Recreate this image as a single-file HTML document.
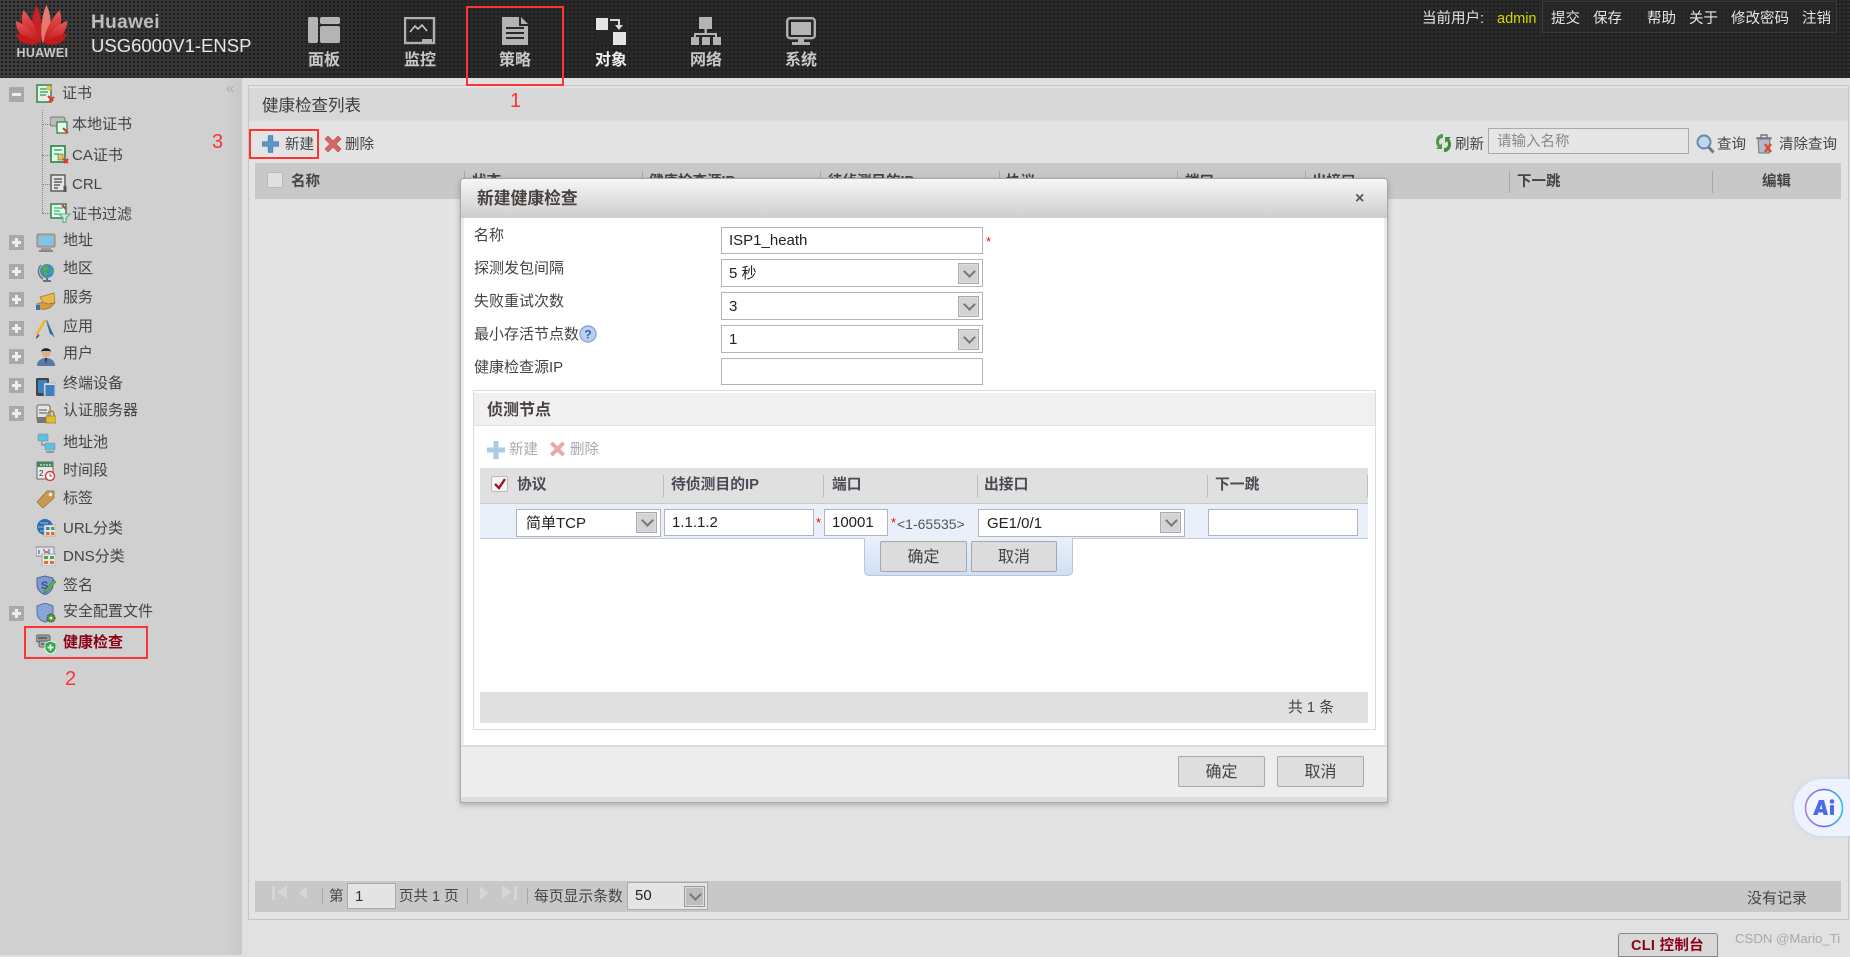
<!DOCTYPE html>
<html lang="zh">
<head>
<meta charset="utf-8">
<title>USG6000V1-ENSP</title>
<style>
*{box-sizing:border-box}
html,body{margin:0;padding:0;width:1850px;height:955px;overflow:hidden;background:#e1e1e1;font-family:"Liberation Sans","Noto Sans CJK SC",sans-serif;color:#444}
.a{position:absolute}
.t{position:absolute;white-space:nowrap;line-height:20px;height:20px;font-size:15px;color:#444;transform:translateY(1px)}
.b{font-weight:bold}
.hd{left:0;top:0;width:1850px;height:78px;background-color:#2a2a2a;background-image:radial-gradient(circle at 2px 2px,#1b1b1b 1px,transparent 1.3px),linear-gradient(90deg,#3e3e3e 0,#353535 200px,#2a2a2a 420px);background-size:4px 4px,100% 100%}
.nav{position:absolute;top:51px;width:60px;text-align:center;font-size:16px;font-weight:bold;color:#c9c9c9;line-height:20px}
.top{color:#e6e6e6;font-size:14.5px}
.side{left:0;top:78px;width:242px;height:877px;background:linear-gradient(90deg,#d0d0d0 0,#d0d0d0 225px,#c8c8c8 242px)}
.pl{position:absolute;left:9px;width:15px;height:15px;background:#a9a9a9}
.pl:before{content:"";position:absolute;left:3px;top:6px;width:9px;height:3px;background:#eee}
.pl.p:after{content:"";position:absolute;left:6px;top:3px;width:3px;height:9px;background:#eee}
.ic{position:absolute;left:36px;width:20px;height:20px}
.rd{position:absolute;border:2px solid #f33;background:transparent;z-index:9}
.num{position:absolute;color:#f33;font-size:20px;line-height:22px;z-index:9}
.sep{position:absolute;width:1px;background:#a8a8a8}
.in{position:absolute;background:#fff;border:1px solid #b4b4b8;font-size:15px;color:#222;line-height:25px;padding-left:7px;white-space:nowrap}
.dd{position:absolute;width:21px;height:21px;background:#d3d3d3;border:1px solid #aaa;box-shadow:inset 0 0 0 1px #ddd}
.dd:after{content:"";position:absolute;left:6px;top:3px;width:7px;height:7px;border-right:2px solid #777;border-bottom:2px solid #777;transform:rotate(45deg)}
.btn{position:absolute;background:#dcdcdc;border:1px solid #a8a8a8;border-radius:2px;text-align:center;font-size:16px;color:#444;line-height:31px}
.star{position:absolute;color:#f00;font-size:13px;line-height:13px;height:13px}
</style>
</head>
<body>

<!-- HEADER -->
<div class="a hd"></div>
<svg class="a" style="left:12px;top:2px" width="60" height="44" viewBox="0 0 60 44">
<defs><linearGradient id="pg" x1="0" y1="0" x2="0" y2="1"><stop offset="0" stop-color="#ea5a58"/><stop offset="1" stop-color="#c01318"/></linearGradient></defs>
<g fill="url(#pg)" transform="translate(29.5 41)">
<path d="M-1 0C-11 -10 -11 -26 -5 -38C-1 -30 2 -14 -1 0Z" fill="#c92024"/>
<path d="M1 0C11 -10 11 -26 5 -38C1 -30 -2 -14 1 0Z" fill="#e8786c"/>
<path d="M-2 0C-17 -6 -23 -20 -18 -33C-10 -24 -3 -12 -2 0Z"/>
<path d="M2 0C17 -6 23 -20 18 -33C10 -24 3 -12 2 0Z"/>
<path d="M-3 0C-16 -1 -26 -10 -25.500 -22C-15 -18 -6 -8 -3 0Z"/>
<path d="M3 0C16 -1 26 -10 25.500 -22C15 -18 6 -8 3 0Z"/>
<path d="M-4 1C-12 3 -23 1 -25.500 -9C-16 -9 -8 -3 -4 1Z" fill="#c41a1e"/>
<path d="M4 1C12 3 23 1 25.500 -9C16 -9 8 -3 4 1Z" fill="#c41a1e"/>
</g>
</svg>
<div class="t b" style="left:16.5px;top:42px;font-size:12.5px;color:#c8c8c8;letter-spacing:.3px">HUAWEI</div>
<div class="t b" style="left:91px;top:12px;font-size:19px;color:#bdbdbd;letter-spacing:.4px">Huawei</div>
<div class="t" style="left:91px;top:35px;font-size:18.500px;color:#e4e8ee">USG6000V1-ENSP</div>

<!-- nav icons -->
<svg class="a" style="left:308px;top:17px" width="32" height="28" viewBox="0 0 32 28" fill="#b4b4b4">
<rect x="0" y="0" width="10" height="26" rx="2"/><rect x="12" y="0" width="20" height="7" rx="2"/><rect x="12" y="9" width="20" height="17" rx="2"/></svg>
<svg class="a" style="left:404px;top:17px" width="32" height="28" viewBox="0 0 32 28">
<rect x="1" y="1" width="29" height="25" fill="none" stroke="#b0b0b0" stroke-width="2.4"/>
<path d="M6 15L11 9L14 12L18 8L23 14" fill="none" stroke="#c8c8c8" stroke-width="1.6"/>
<path d="M18 22h10v4h-10z" fill="#b0b0b0"/></svg>
<svg class="a" style="left:502px;top:17px" width="27" height="29" viewBox="0 0 27 29">
<path d="M0 0H17V9H26V28H0Z" fill="#b4b4b4"/><path d="M19 0L26 7H19Z" fill="#b4b4b4"/>
<path d="M4 11H22M4 16H22M4 21H22" stroke="#2a2a2a" stroke-width="2"/></svg>
<svg class="a" style="left:595px;top:17px" width="32" height="28" viewBox="0 0 32 28">
<rect x="0" y="0" width="32" height="28" fill="#262626"/>
<rect x="1" y="1" width="12" height="12" fill="#e4e4e4"/><rect x="18" y="15" width="13" height="13" fill="#e4e4e4"/>
<path d="M15 3H24V8" fill="none" stroke="#d8d8d8" stroke-width="2"/><path d="M20 8H28L24 13Z" fill="#d8d8d8"/></svg>
<svg class="a" style="left:690px;top:17px" width="32" height="28" viewBox="0 0 32 28" fill="#b4b4b4">
<rect x="9" y="0" width="13" height="12"/><rect x="14.5" y="12" width="2.4" height="6"/><path d="M4 16H27V20H25V18H6V20H4Z"/>
<path d="M1 20H9V28H1ZM12 20H20V28H12ZM23 20H31V28H23Z"/></svg>
<svg class="a" style="left:786px;top:17px" width="30" height="28" viewBox="0 0 30 28">
<rect x="1.2" y="1.2" width="27.6" height="20" rx="3" fill="none" stroke="#b0b0b0" stroke-width="2.4"/>
<rect x="5" y="5" width="20" height="13" fill="#b4b4b4"/><rect x="12" y="21" width="6" height="4" fill="#b0b0b0"/><rect x="6" y="25" width="18" height="3" fill="#b0b0b0"/></svg>

<div class="nav" style="left:294px">面板</div>
<div class="nav" style="left:390px">监控</div>
<div class="nav" style="left:485px">策略</div>
<div class="nav" style="left:581px;color:#f2f2f2">对象</div>
<div class="nav" style="left:676px">网络</div>
<div class="nav" style="left:771px">系统</div>

<div class="t top" style="left:1422px;top:8px">当前用户:</div>
<div class="t" style="left:1497px;top:8px;font-size:14.5px;color:#d6d600">admin</div>
<div class="a" style="left:1542px;top:1px;width:295px;height:32px;border:1px solid #3a3a3a;background:rgba(40,40,40,.5)"></div>
<div class="t top" style="left:1551px;top:8px">提交</div>
<div class="t top" style="left:1593px;top:8px">保存</div>
<div class="t top" style="left:1647px;top:8px">帮助</div>
<div class="t top" style="left:1689px;top:8px">关于</div>
<div class="t top" style="left:1731px;top:8px">修改密码</div>
<div class="t top" style="left:1802px;top:8px">注销</div>

<!-- SIDEBAR -->
<div class="a side"></div>
<div class="t" style="left:226px;top:78px;font-size:15px;color:#aaa">«</div>
<div class="a" style="left:42px;top:110px;height:103px;border-left:1px dotted #888"></div>
<div class="a" style="left:42px;top:124px;width:8px;border-top:1px dotted #888"></div>
<div class="a" style="left:42px;top:155px;width:8px;border-top:1px dotted #888"></div>
<div class="a" style="left:42px;top:184px;width:8px;border-top:1px dotted #888"></div>
<div class="a" style="left:42px;top:213px;width:8px;border-top:1px dotted #888"></div>

<div class="pl" style="top:87px"></div>
<div class="pl p" style="top:235px"></div>
<div class="pl p" style="top:264px"></div>
<div class="pl p" style="top:292px"></div>
<div class="pl p" style="top:321px"></div>
<div class="pl p" style="top:349px"></div>
<div class="pl p" style="top:378px"></div>
<div class="pl p" style="top:406px"></div>
<div class="pl p" style="top:606px"></div>

<!-- cert icon -->
<svg class="ic" style="top:84px" viewBox="0 0 20 20"><rect x="1" y="1" width="14" height="17" fill="#e8f0e4" stroke="#3f8a55" stroke-width="1.6"/><path d="M4 5H12M4 8H12M4 11H10" stroke="#4a7" stroke-width="1.4"/><path d="M12 12L17 17M13 18L18 13" stroke="#d33" stroke-width="2"/><circle cx="13" cy="4" r="2.5" fill="#e8c040"/></svg>
<svg class="a" style="left:50px;top:115px" width="20" height="20" viewBox="0 0 20 20"><rect x="0" y="2" width="15" height="9" rx="2" fill="#bbb" stroke="#777"/><rect x="7" y="7" width="10" height="11" fill="#dfe" stroke="#3f8a55" stroke-width="1.4"/><path d="M13 13L18 18" stroke="#d33" stroke-width="2"/></svg>
<svg class="a" style="left:50px;top:145px" width="20" height="20" viewBox="0 0 20 20"><rect x="1" y="1" width="14" height="16" fill="#dfe" stroke="#3f8a55" stroke-width="1.8"/><path d="M4 5H12M4 9H8" stroke="#4a7" stroke-width="1.4"/><rect x="8" y="9" width="5" height="6" fill="#e6c84a" stroke="#555" stroke-width=".6"/><path d="M13 14L18 18M14 18L18 14" stroke="#d33" stroke-width="2"/></svg>
<svg class="a" style="left:50px;top:174px" width="20" height="20" viewBox="0 0 20 20"><rect x="1" y="1" width="14" height="16" fill="#e4e4e4" stroke="#666" stroke-width="1.6"/><path d="M4 5H12M4 8H12M4 11H10M4 14H8" stroke="#444" stroke-width="1.3"/><path d="M15 12V18" stroke="#555" stroke-width="3"/></svg>
<svg class="a" style="left:50px;top:203px" width="21" height="20" viewBox="0 0 21 20"><rect x="1" y="1" width="15" height="14" fill="#dfe" stroke="#3f8a55" stroke-width="1.6"/><path d="M4 5H13M4 8H10M4 11H10" stroke="#4a7" stroke-width="1.3"/><path d="M9 11H20L16 15V19L13 20V15Z" fill="#cfe8d0" stroke="#5a9"/><path d="M12 2L16 6" stroke="#d33" stroke-width="2"/></svg>

<svg class="ic" style="top:233px" viewBox="0 0 20 20"><rect x="1" y="1" width="18" height="13" rx="1.5" fill="#aaa" stroke="#888"/><rect x="3" y="3" width="14" height="9" fill="#7ec6e6"/><rect x="5" y="15" width="10" height="2" fill="#9a9aa8"/><rect x="3" y="17" width="14" height="2" fill="#888"/></svg>
<svg class="ic" style="top:262px" viewBox="0 0 20 20"><circle cx="11" cy="9" r="7" fill="#3b8fcf"/><path d="M7 5L11 3L13 6L10 9L12 12L9 14L7 10ZM14 8L17 7L17 11L14 12Z" fill="#5bae3c"/><path d="M5 3A9 9 0 0 0 7 17" fill="none" stroke="#777" stroke-width="1.6"/><path d="M7 19H15M11 16V19" stroke="#666" stroke-width="1.8"/></svg>
<svg class="ic" style="top:291px" viewBox="0 0 20 20"><path d="M4 6L18 2L19 12L8 14Z" fill="#e8b850" stroke="#a87a20" stroke-width=".8"/><path d="M1 13C6 10 10 12 12 13L18 12C16 17 10 19 5 18H1Z" fill="#d89a40" stroke="#96702c" stroke-width=".8"/><rect x="0" y="14" width="4" height="5" fill="#3a6fb8"/></svg>
<svg class="ic" style="top:319px" viewBox="0 0 20 20"><path d="M1 16L9 2H11L18 18" fill="none" stroke="#777" stroke-width="1"/><path d="M9 1L1 15" stroke="#e8b830" stroke-width="2.6"/><path d="M10 2L18 17L14 15Z" fill="#1f6fb8"/><path d="M0 19L3 16" stroke="#555" stroke-width="1.6"/></svg>
<svg class="ic" style="top:347px" viewBox="0 0 20 20"><circle cx="10" cy="6" r="4.5" fill="#d8b08e"/><path d="M5 5C5 0 15 0 15 5L14 4H6Z" fill="#222"/><path d="M1 19C1 13 6 11 10 11C14 11 19 13 19 19Z" fill="#5878a8"/><path d="M9 11H11L10 17Z" fill="#222"/></svg>
<svg class="ic" style="top:377px" viewBox="0 0 20 20"><rect x="0" y="1" width="13" height="18" rx="1.5" fill="#444"/><rect x="2" y="3" width="9" height="13" fill="#3a82c4"/><rect x="8" y="6" width="12" height="14" rx="1" fill="#ddd" stroke="#999" stroke-width=".6"/><rect x="9.5" y="8" width="9" height="11" fill="#3d7fc2"/></svg>
<svg class="ic" style="top:404px" viewBox="0 0 20 20"><rect x="1" y="1" width="13" height="16" rx="2" fill="#e4e4e4" stroke="#666"/><path d="M3 6H11M3 9H11" stroke="#555"/><rect x="1" y="13" width="13" height="6" fill="#777"/><path d="M12 12V10A3 3 0 0 1 18 10V12" fill="none" stroke="#a08028" stroke-width="1.4"/><rect x="10" y="12" width="10" height="7" fill="#e2bb3c" stroke="#8a6e1a" stroke-width=".6"/></svg>
<svg class="ic" style="top:433px" viewBox="0 0 20 20"><rect x="2" y="1" width="10" height="7" rx="1" fill="#5cc0e8" stroke="#888" stroke-width=".6"/><rect x="9" y="10" width="10" height="7" rx="1" fill="#5cc0e8" stroke="#888" stroke-width=".6"/><path d="M6 8V12H9" fill="none" stroke="#888" stroke-width="1.2"/><rect x="10" y="18" width="8" height="2" fill="#999"/></svg>
<svg class="ic" style="top:461px" viewBox="0 0 20 20"><rect x="1" y="1" width="16" height="17" fill="#e8e8e8" stroke="#666"/><rect x="1" y="1" width="16" height="5" fill="#3f8a55"/><path d="M5 3V5M8 3V5M11 3V5M14 3V5" stroke="#fff"/><text x="3" y="15" font-size="8" fill="#333" font-family="Liberation Sans">2</text><circle cx="14" cy="15" r="4.5" fill="#fff" stroke="#d33" stroke-width="1.4"/><path d="M14 12.5V15H16" stroke="#555" fill="none"/></svg>
<svg class="ic" style="top:489px" viewBox="0 0 20 20"><path d="M1 13L11 2H18V9L7 19Z" fill="#c69a52" stroke="#96702c" stroke-width=".7"/><circle cx="14.5" cy="5.5" r="1.8" fill="#eee"/></svg>
<svg class="ic" style="top:518px" viewBox="0 0 20 20"><circle cx="9" cy="9" r="8" fill="#2a6eb0"/><path d="M4 5H12M2 9H16M4 13H12" stroke="#8ec4ea"/><rect x="8" y="7" width="12" height="11" fill="#e4e4e4" stroke="#999" stroke-width=".6"/><rect x="10" y="9" width="3.5" height="3" fill="#3a7fc0"/><rect x="15" y="9" width="3.5" height="3" fill="#5aa04a"/><rect x="10" y="14" width="3.5" height="3" fill="#e07030"/><rect x="15" y="14" width="3.5" height="3" fill="#e07030"/></svg>
<svg class="ic" style="top:546px" viewBox="0 0 20 20"><rect x="0" y="1" width="18" height="9" fill="#e4e4e4" stroke="#777" stroke-width=".8"/><path d="M3 4V8M7 4H9M13 3V8" stroke="#3a6fb8" stroke-width="1.2"/><path d="M8 6H12" stroke="#d33" stroke-width="1.4"/><rect x="6" y="8" width="14" height="12" fill="#e4e4e4" stroke="#888" stroke-width=".6"/><rect x="8" y="10" width="4" height="3" fill="#5aa04a"/><rect x="14" y="10" width="4" height="3" fill="#5aa04a"/><rect x="8" y="15" width="4" height="3" fill="#e07030"/><rect x="14" y="15" width="4" height="3" fill="#e07030"/></svg>
<svg class="ic" style="top:575px" viewBox="0 0 20 20"><path d="M1 3L9 1L17 3V10C17 15 13 18 9 20C5 18 1 15 1 10Z" fill="#7f9ad0" stroke="#4a66a0"/><text x="5" y="14" font-size="11" font-weight="bold" fill="#33508a" font-family="Liberation Sans">S</text><path d="M9 15L18 5L20 7L11 17L8 18Z" fill="#5eb04a" stroke="#2a6e2a" stroke-width=".5"/></svg>
<svg class="ic" style="top:603px" viewBox="0 0 20 20"><path d="M1 3L9 0L17 3V10C17 15 13 18 9 19C5 18 1 15 1 10Z" fill="#88a4d8" stroke="#5570a8"/><circle cx="15" cy="15" r="4" fill="#5a9a3a" stroke="#2a5a1e" stroke-dasharray="1.6 .8"/><circle cx="15" cy="15" r="1.4" fill="#dfd"/></svg>
<svg class="ic" style="top:634px" viewBox="0 0 20 20"><rect x="0" y="1" width="14" height="7" rx="2" fill="#999" stroke="#666"/><rect x="3" y="7" width="12" height="6" rx="1.5" fill="#aaa" stroke="#666"/><path d="M2 4H11M5 10H12" stroke="#333"/><path d="M9 9L14.500 7L20 9V14C20 17 17 19 14.500 20C12 19 9 17 9 14Z" fill="#2fa84a" stroke="#fff" stroke-width=".8"/><path d="M14.500 10.500V16.500M11.500 13.500H17.500" stroke="#fff" stroke-width="1.800"/></svg>

<div class="t" style="left:62px;top:83px">证书</div>
<div class="t" style="left:72px;top:114px">本地证书</div>
<div class="t" style="left:72px;top:145px">CA证书</div>
<div class="t" style="left:72px;top:174px">CRL</div>
<div class="t" style="left:72px;top:204px">证书过滤</div>
<div class="t" style="left:63px;top:230px">地址</div>
<div class="t" style="left:63px;top:258px">地区</div>
<div class="t" style="left:63px;top:287px">服务</div>
<div class="t" style="left:63px;top:316px">应用</div>
<div class="t" style="left:63px;top:343px">用户</div>
<div class="t" style="left:63px;top:373px">终端设备</div>
<div class="t" style="left:63px;top:400px">认证服务器</div>
<div class="t" style="left:63px;top:432px">地址池</div>
<div class="t" style="left:63px;top:460px">时间段</div>
<div class="t" style="left:63px;top:488px">标签</div>
<div class="t" style="left:63px;top:518px">URL分类</div>
<div class="t" style="left:63px;top:546px">DNS分类</div>
<div class="t" style="left:63px;top:575px">签名</div>
<div class="t" style="left:63px;top:601px">安全配置文件</div>
<div class="t b" style="left:63px;top:632px;color:#8b0015">健康检查</div>

<!-- MAIN PANEL -->
<div class="a" style="left:248px;top:85px;width:1601px;height:835px;background:#e3e3e3;border:1px solid #c6c6c6"></div>
<div class="a" style="left:249px;top:88px;width:1599px;height:33px;background:#d8d8d8;border-bottom:1px solid #dcdcdc"></div>
<div class="t" style="left:262px;top:95px;font-size:16.500px;color:#3c3c3c">健康检查列表</div>

<svg class="a" style="left:262px;top:134px" width="17" height="20" viewBox="0 0 18 20"><path d="M6.500 1H11.500V7.500H18V12.500H11.500V19H6.500V12.500H0V7.500H6.500Z" fill="#5f95c6" stroke="#3e73a6" stroke-width=".6"/></svg>
<div class="t" style="left:285px;top:134px;font-size:14.500px">新建</div>
<svg class="a" style="left:324px;top:135px" width="18" height="18" viewBox="0 0 18 18"><path d="M1 4L4 1L9 6L14 1L17 4L12 9L17 14L14 17L9 12L4 17L1 14L6 9Z" fill="#d5676a" stroke="#b04448" stroke-width=".6"/></svg>
<div class="t" style="left:345px;top:134px;font-size:14.500px">删除</div>

<svg class="a" style="left:1435px;top:133px" width="17" height="20" viewBox="0 0 17 20"><path d="M8 1C3 1 1 5 1 9C1 11 2 13 3 14L1 16H7V10L5 12C3 9 4 5 8 5Z" fill="#4c9a4a"/><path d="M9 19C14 19 16 15 16 11C16 9 15 7 14 6L16 4H10V10L12 8C14 11 13 15 9 15Z" fill="#3f8f3e"/></svg>
<div class="t" style="left:1455px;top:134px;font-size:14.500px">刷新</div>
<div class="a" style="left:1488px;top:128px;width:201px;height:26px;background:#e6e6e6;border:1px solid #aaa"></div>
<div class="t" style="left:1497px;top:131px;font-size:14.500px;color:#888">请输入名称</div>
<svg class="a" style="left:1696px;top:134px" width="19" height="20" viewBox="0 0 19 20"><circle cx="8" cy="8" r="6.500" fill="#bcd6f0" stroke="#6a88ac" stroke-width="2"/><path d="M12.500 13L17.500 18.500" stroke="#707a88" stroke-width="3"/></svg>
<div class="t" style="left:1717px;top:134px;font-size:14.500px">查询</div>
<svg class="a" style="left:1755px;top:134px" width="20" height="20" viewBox="0 0 20 20"><path d="M3 5H15L14 19H4Z" fill="#b4bccc" stroke="#6a7488"/><path d="M1 4H17M6 4V1H12V4" fill="none" stroke="#777" stroke-width="1.400"/><path d="M10 10L16 18M16 10L10 18" stroke="#d9502e" stroke-width="2.600"/></svg>
<div class="t" style="left:1779px;top:134px;font-size:14.500px">清除查询</div>

<!-- table head -->
<div class="a" style="left:255px;top:163px;width:1586px;height:36px;background:#c8c8c8"></div>
<div class="a" style="left:267px;top:172px;width:16px;height:16px;background:#e0e0e0;border:1px solid #b8b8b8;border-radius:2px"></div>
<div class="t b" style="left:291px;top:171px;font-size:14.500px">名称</div>
<div class="t b" style="left:472px;top:171px;font-size:14.500px">状态</div>
<div class="t b" style="left:649px;top:171px;font-size:14.500px">健康检查源IP</div>
<div class="t b" style="left:828px;top:171px;font-size:14.500px">待侦测目的IP</div>
<div class="t b" style="left:1006px;top:171px;font-size:14.500px">协议</div>
<div class="t b" style="left:1185px;top:171px;font-size:14.500px">端口</div>
<div class="t b" style="left:1312px;top:171px;font-size:14.500px">出接口</div>
<div class="t b" style="left:1517px;top:171px;font-size:14.500px">下一跳</div>
<div class="t b" style="left:1762px;top:171px;font-size:14.500px">编辑</div>
<div class="sep" style="left:464px;top:171px;height:22px"></div>
<div class="sep" style="left:642px;top:171px;height:22px"></div>
<div class="sep" style="left:820px;top:171px;height:22px"></div>
<div class="sep" style="left:999px;top:171px;height:22px"></div>
<div class="sep" style="left:1177px;top:171px;height:22px"></div>
<div class="sep" style="left:1305px;top:171px;height:22px"></div>
<div class="sep" style="left:1509px;top:171px;height:22px"></div>
<div class="sep" style="left:1712px;top:171px;height:22px"></div>

<!-- pagination -->
<div class="a" style="left:255px;top:881px;width:1586px;height:31px;background:#c8c8c8"></div>
<svg class="a" style="left:270px;top:884px" width="20" height="18" viewBox="0 0 20 18" fill="#d6d6d6"><rect x="2" y="2" width="3" height="14"/><path d="M17 1V15L7 8Z"/></svg>
<svg class="a" style="left:297px;top:884px" width="12" height="18" viewBox="0 0 12 18" fill="#d6d6d6"><path d="M10 2V16L2 9Z"/></svg>
<div class="sep" style="left:322px;top:888px;height:16px"></div>
<div class="t" style="left:329px;top:886px;font-size:14.500px">第</div>
<div class="a" style="left:347px;top:883px;width:49px;height:26px;background:#e4e4e4;border:1px solid #aaa;font-size:15px;line-height:25px;padding-left:7px;color:#333">1</div>
<div class="t" style="left:399px;top:886px;font-size:14.500px">页共 1 页</div>
<div class="sep" style="left:467px;top:888px;height:16px"></div>
<svg class="a" style="left:478px;top:884px" width="12" height="18" viewBox="0 0 12 18" fill="#d6d6d6"><path d="M2 2V16L10 9Z"/></svg>
<svg class="a" style="left:499px;top:884px" width="20" height="18" viewBox="0 0 20 18" fill="#d6d6d6"><path d="M3 1V15L13 8Z"/><rect x="15" y="2" width="3" height="14"/></svg>
<div class="sep" style="left:527px;top:888px;height:16px"></div>
<div class="t" style="left:534px;top:886px;font-size:14.800px">每页显示条数</div>
<div class="a" style="left:627px;top:882px;width:81px;height:28px;background:#e4e4e4;border:1px solid #aaa"></div>
<div class="t" style="left:635px;top:885px;font-size:15px;color:#222">50</div>
<div class="dd" style="left:684px;top:886px;background:#bdbdbd;border-color:#999"></div>
<div class="t" style="left:1747px;top:888px">没有记录</div>

<!-- CLI -->
<div class="a" style="left:1618px;top:933px;width:100px;height:24px;background:#d8d8d8;border:1px solid #888;border-radius:3px 3px 0 0"></div>
<div class="t b" style="left:1631px;top:935px;font-size:14.500px;color:#8b0015;letter-spacing:.3px">CLI 控制台</div>
<div class="t" style="left:1735px;top:928px;font-size:13.200px;color:#a8a8a8;z-index:9">CSDN @Mario_Ti</div>

<!-- AI -->
<div class="a" style="left:1794px;top:779px;width:70px;height:57px;border-radius:28px 0 0 28px;background:#edf2fe;box-shadow:0 0 5px #c4cef5"></div>
<svg class="a" style="left:1803px;top:787px" width="42" height="42" viewBox="0 0 42 42">
<defs><linearGradient id="ai" x1="0" y1="0" x2="1" y2="0"><stop offset="0" stop-color="#a77fe6"/><stop offset=".5" stop-color="#5d72ea"/><stop offset="1" stop-color="#2bc0ee"/></linearGradient></defs>
<circle cx="21" cy="21" r="18.500" fill="#f3f5ff" stroke="url(#ai)" stroke-width="1.600"/>
<path d="M10 28L16 13H21L25 28H20.500L20 25.500H15.500L14.500 28ZM16.800 22H19.300L18.400 17.500Z" fill="#4d6be6"/>
<rect x="27" y="18" width="4" height="10" rx="1" fill="#4d6be6"/><circle cx="29" cy="14.500" r="2.300" fill="#4d6be6"/></svg>

<!-- DIALOG -->
<div class="a" style="left:460px;top:178px;width:928px;height:625px;background:#ededed;border:1px solid #a8a8a8;border-radius:4px 4px 0 0;box-shadow:0 2px 6px rgba(0,0,0,.25)"></div>
<div class="a" style="left:461px;top:179px;width:926px;height:39px;background:linear-gradient(#f6f6f6,#cdcdcd);border-radius:3px 3px 0 0"></div>
<div class="a" style="left:461px;top:797px;width:926px;height:5px;background:#dcdcdc"></div>
<div class="t b" style="left:477px;top:188px;font-size:16.800px;color:#4a4040">新建健康检查</div>
<div class="t" style="left:1355px;top:188px;font-size:16px;color:#555;font-weight:bold">×</div>
<div class="a" style="left:464px;top:218px;width:920px;height:527px;background:#fff"></div>
<div class="a" style="left:461px;top:745px;width:926px;height:2px;background:#dcdcdc"></div>

<div class="t" style="left:474px;top:225px">名称</div>
<div class="t" style="left:474px;top:258px">探测发包间隔</div>
<div class="t" style="left:474px;top:291px">失败重试次数</div>
<div class="t" style="left:474px;top:324px">最小存活节点数</div>
<div class="t" style="left:474px;top:357px">健康检查源IP</div>
<svg class="a" style="left:579px;top:325px" width="18" height="18" viewBox="0 0 18 18"><circle cx="9" cy="9" r="8" fill="#bcd0ee" stroke="#8aa8d8" stroke-width="1.400"/><text x="9" y="13.500" font-size="12" font-weight="bold" text-anchor="middle" fill="#3a5ca8" font-family="Liberation Sans">?</text></svg>

<div class="in" style="left:721px;top:227px;width:262px;height:27px">ISP1_heath</div>
<div class="star" style="left:986px;top:235px">*</div>
<div class="in" style="left:721px;top:259px;width:262px;height:28px;line-height:27px">5 秒</div>
<div class="dd" style="left:958px;top:263px"></div>
<div class="in" style="left:721px;top:292px;width:262px;height:28px;line-height:27px">3</div>
<div class="dd" style="left:958px;top:296px"></div>
<div class="in" style="left:721px;top:325px;width:262px;height:28px;line-height:27px">1</div>
<div class="dd" style="left:958px;top:329px"></div>
<div class="in" style="left:721px;top:358px;width:262px;height:27px"></div>

<!-- section -->
<div class="a" style="left:473px;top:390px;width:903px;height:340px;border:1px solid #dcdcdc;background:#fff"></div>
<div class="a" style="left:474px;top:393px;width:901px;height:33px;background:#f0f0f0;border-bottom:1px solid #e4e4e4"></div>
<div class="t b" style="left:487px;top:400px;font-size:16px;color:#4a4040">侦测节点</div>

<svg class="a" style="left:487px;top:440px" width="18" height="20" viewBox="0 0 18 20"><path d="M6.500 1H11.500V7.500H18V12.500H11.500V19H6.500V12.500H0V7.500H6.500Z" fill="#a9cbe6"/></svg>
<div class="t" style="left:509px;top:439px;font-size:14.500px;color:#aaa">新建</div>
<svg class="a" style="left:549px;top:440px" width="17" height="18" viewBox="0 0 18 18"><path d="M1 4L4 1L9 6L14 1L17 4L12 9L17 14L14 17L9 12L4 17L1 14L6 9Z" fill="#eba9a9"/></svg>
<div class="t" style="left:570px;top:439px;font-size:14.500px;color:#aaa">删除</div>

<div class="a" style="left:480px;top:468px;width:888px;height:36px;background:#e0e0e0;border-bottom:1px solid #c8c8c8"></div>
<div class="a" style="left:491px;top:476px;width:17px;height:16px;background:#f4f4f4;border:1px solid #bbb;border-radius:2px"></div>
<svg class="a" style="left:492px;top:476px" width="16" height="16" viewBox="0 0 16 16"><path d="M3 8L7 12L13 3" fill="none" stroke="#a51423" stroke-width="2.400"/></svg>
<div class="t b" style="left:517px;top:474px;font-size:14.800px;color:#4a4a55">协议</div>
<div class="t b" style="left:671px;top:474px;font-size:14.800px;color:#4a4a55">待侦测目的IP</div>
<div class="t b" style="left:832px;top:474px;font-size:14.800px;color:#4a4a55">端口</div>
<div class="t b" style="left:984px;top:474px;font-size:14.800px;color:#4a4a55">出接口</div>
<div class="t b" style="left:1215px;top:474px;font-size:14.800px;color:#4a4a55">下一跳</div>
<div class="sep" style="left:663px;top:475px;height:22px;background:#bbb"></div>
<div class="sep" style="left:823px;top:475px;height:22px;background:#bbb"></div>
<div class="sep" style="left:977px;top:475px;height:22px;background:#bbb"></div>
<div class="sep" style="left:1207px;top:475px;height:22px;background:#bbb"></div>
<div class="sep" style="left:1367px;top:475px;height:22px;background:#bbb"></div>

<div class="a" style="left:480px;top:504px;width:888px;height:35px;background:#e9f0fa;border-bottom:1px solid #bccbdd"></div>
<div class="in" style="left:516px;top:509px;width:145px;height:28px;line-height:27px;padding-left:9px">简单TCP</div>
<div class="dd" style="left:636px;top:512px"></div>
<div class="in" style="left:664px;top:509px;width:150px;height:27px;line-height:26px">1.1.1.2</div>
<div class="star" style="left:816px;top:516px">*</div>
<div class="in" style="left:824px;top:509px;width:64px;height:27px">10001</div>
<div class="star" style="left:891px;top:516px">*</div>
<div class="t" style="left:897px;top:513px;font-size:14px;color:#555">&lt;1-65535&gt;</div>
<div class="in" style="left:978px;top:509px;width:207px;height:28px;line-height:27px;padding-left:8px">GE1/0/1</div>
<div class="dd" style="left:1160px;top:512px"></div>
<div class="in" style="left:1208px;top:509px;width:150px;height:27px"></div>

<div class="a" style="left:864px;top:538px;width:209px;height:38px;background:linear-gradient(#e9f0fa,#cfe0f5);border:1px solid #b8c6d8;border-top:none;border-radius:0 0 5px 5px"></div>
<div class="btn" style="left:880px;top:541px;width:87px;height:31px">确定</div>
<div class="btn" style="left:971px;top:541px;width:86px;height:31px">取消</div>

<div class="a" style="left:480px;top:692px;width:888px;height:31px;background:#e0e0e0"></div>
<div class="t" style="left:1288px;top:697px;font-size:14.800px">共 1 条</div>

<div class="btn" style="left:1178px;top:756px;width:87px;height:31px;background:#dedede">确定</div>
<div class="btn" style="left:1277px;top:756px;width:87px;height:31px;background:#dedede">取消</div>

<!-- ANNOTATIONS -->
<div class="rd" style="left:466px;top:6px;width:98px;height:80px"></div>
<div class="rd" style="left:249px;top:129px;width:70px;height:30px"></div>
<div class="rd" style="left:24px;top:626px;width:124px;height:33px"></div>
<div class="num" style="left:510px;top:90px">1</div>
<div class="num" style="left:65px;top:668px">2</div>
<div class="num" style="left:212px;top:131px">3</div>

</body>
</html>
